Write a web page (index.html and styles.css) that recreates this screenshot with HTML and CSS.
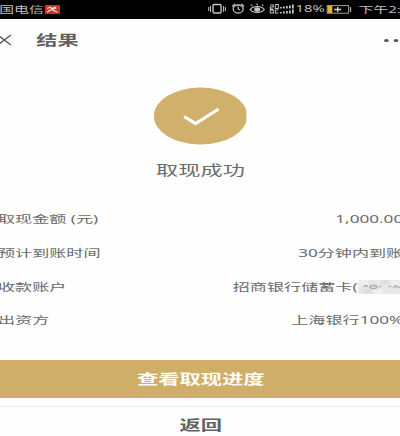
FILE: index.html
```html
<!DOCTYPE html>
<html lang="zh-CN">
<head>
<meta charset="utf-8">
<title>结果</title>
<link rel="stylesheet" href="styles.css">
</head>
<body>
<div class="screen">
  <header class="status">
    <span class="carrier">国电信</span>
    <svg class="badge" viewBox="0 0 16 9" preserveAspectRatio="none"><rect width="16" height="9" fill="#c9362b"/><path d="M2.5 3.5 6 2l1 1.5L12 2M2.5 7 7 4.5l5-1.500M8 5l5 2" fill="none" stroke="#ffe2d8" stroke-width="1.3"/></svg>
    <svg class="tray" viewBox="0 0 86 14" preserveAspectRatio="none" fill="none" stroke="#c4c4c4">
      <rect x="5" y="2.500" width="8" height="8.500" rx="1" stroke-width="1.400"/>
      <path d="M2.500 4v6M15.500 4v6M.7 5v4M17.300 5v4" stroke-width="1"/>
      <ellipse cx="30" cy="7" rx="5" ry="4" stroke-width="1.300"/>
      <path d="M30 4.500V7l2 1M24 4.500l3-2.500M36 4.500 33 2" stroke-width="1.200"/>
      <path d="M42 7.500c3-4 11-4 14 0-3 4-11 4-14 0ZM44 4l-1-1.500M49 3V1.500M54 4l1-1.500" stroke-width="1.200"/>
      <ellipse cx="49" cy="7.500" rx="2.500" ry="1.800" fill="#c4c4c4"/>
      <path d="M62 3h3v2h-3v2h3M67 2.500v4h3v-4h-3M62 8h3v3h-3zM70 8h-3v3h3" stroke-width="1"/>
      <path d="M72.500 5v1.500M75.500 4.500v2M78.500 4v2.500M81.500 3.500v3M84.500 2.500v4M72.500 10v1.500M75.500 9.500v2M78.500 9v2.500M81.500 8.500v3M84.500 7.500v4" stroke-width="1.800"/>
    </svg>
    <span class="percent">18%</span>
    <svg class="battery" viewBox="0 0 26 9" preserveAspectRatio="none"><rect x=".6" y=".6" width="22" height="7.600" fill="none" stroke="#aaa089" stroke-width="1"/><rect x="1" y="1" width="5" height="7" fill="#efab38"/><path d="M8 4.500h7M11.500 2v5" stroke="#ddd" stroke-width="1.400"/><path d="M24.500 2v5" stroke="#aaa" stroke-width="1.300"/></svg>
    <span class="clock">下午2:43</span>
  </header>
  <nav class="nav">
    <svg class="close" viewBox="0 0 16 12" preserveAspectRatio="none"><path d="M1 1l13 10M14 1 1 11" stroke="#555" stroke-width="1.300"/></svg>
    <h1 class="nav-title">结果</h1>
    <span class="more"><i></i><i></i><i></i></span>
  </nav>
  <main>
    <section class="result">
      <svg class="check" viewBox="0 0 94 58" preserveAspectRatio="none"><ellipse cx="47" cy="29" rx="46.700" ry="28.500" fill="#d1b06b"/><path d="M30.500 29.500 42 36.500 65 22" fill="none" stroke="#fff" stroke-width="3.200"/></svg>
      <h2 class="result-title">取现成功</h2>
    </section>
    <dl class="details">
      <div class="row"><dt>取现金额 (元)</dt><dd>1,000.00</dd></div>
      <div class="row"><dt>预计到账时间</dt><dd>30分钟内到账</dd></div>
      <div class="row"><dt>收款账户</dt><dd class="account">招商银行储蓄卡(<svg class="mask" viewBox="0 0 44 14" preserveAspectRatio="none"><rect width="44" height="14" fill="#e7e7e7"/><path d="M0 0h9v5H0zM14 9h9v5h-9zM31 0h9v5h-9z" fill="#eee"/><path d="M22 0h8v4h-8zM5 9h8v5H5z" fill="#dfdfdf"/><path d="M5 7c2-2 3-2 4 0M11 7c0-2 7-2 7 0s-7 2-7 0M20 6l2 1M29 7l3-1M34 8c1-3 3-3 4 0M39 7l4 1" fill="none" stroke="#aaa" stroke-width="1.300"/></svg></dd></div>
      <div class="row"><dt>出资方</dt><dd>上海银行100%</dd></div>
    </dl>
    <button class="primary">查看取现进度</button>
    <button class="secondary">返回</button>
  </main>
</div>
</body>
</html>
```
FILE: styles.css
```css
* { box-sizing: border-box; margin: 0; padding: 0; }

body {
  width: 400px;
  height: 436px;
  overflow: hidden;
  background: #fefefe;
  font-family: "Noto Sans", "Noto Sans CJK SC", sans-serif;
  color: #6b6b6b;
}

.screen {
  width: 250px;
  height: 436px;
  overflow: hidden;
  transform: scaleX(1.6);
  transform-origin: 0 0;
}

.status {
  display: flex;
  align-items: center;
  height: 18.500px;
  background: #000;
  color: #bdbdbd;
  font-size: 9px;
  line-height: 18px;
  white-space: nowrap;
}
.status > * { flex-shrink: 0; }
.carrier { width: 28.500px; margin-left: -0.500px; font-size: 9.300px; }
.badge { width: 9.500px; height: 9px; }
.tray { width: 54px; height: 14px; margin-left: 92.500px; }
.percent { width: 18px; margin-left: 0.700px; font-size: 9.300px; }
.battery { width: 16px; height: 9px; margin-left: 1.500px; }
.clock { margin-left: 3.800px; font-size: 9.300px; }
.carrier, .clock { position: relative; top: 1px; }

.nav {
  display: flex;
  align-items: center;
  height: 43px;
}
.close { width: 10px; height: 12px; margin-left: -1.800px; }
.nav-title { margin-left: 14.500px; font-size: 13.200px; line-height: 20px; font-weight: 700; color: #616161; }
.more { display: flex; gap: 3.100px; margin-left: auto; margin-right: -5.300px; }
.more i { width: 3px; height: 3px; border-radius: 50%; background: #555; }

.result {
  display: flex;
  flex-direction: column;
  align-items: center;
  padding-top: 25.500px;
}
.check { width: 58.750px; height: 58px; }
.result-title { margin: 13.500px 0 0 0.600px; font-size: 13.900px; line-height: 22px; font-weight: 400; }

.details { margin: 22.500px -2px 0 -1.300px; }
.row {
  display: flex;
  justify-content: space-between;
  height: 33.800px;
  font-size: 10.700px;
  line-height: 33.800px;
  white-space: nowrap;
}
.account { display: flex; align-items: center; }
.mask { width: 28.500px; height: 14px; }

button {
  display: block;
  width: 100%;
  border: 0;
  font-family: inherit;
  font-size: 13.300px;
  font-weight: 700;
}
.primary {
  height: 38px;
  margin-top: 21.500px;
  padding-left: 1px;
  background: #cfae69;
  color: #fffdf5;
}
.secondary {
  height: 36px;
  margin-top: 8px;
  padding-left: 1px;
  border-top: 1px solid #ececec;
  background: #fefefe;
  color: #626262;
}
```
